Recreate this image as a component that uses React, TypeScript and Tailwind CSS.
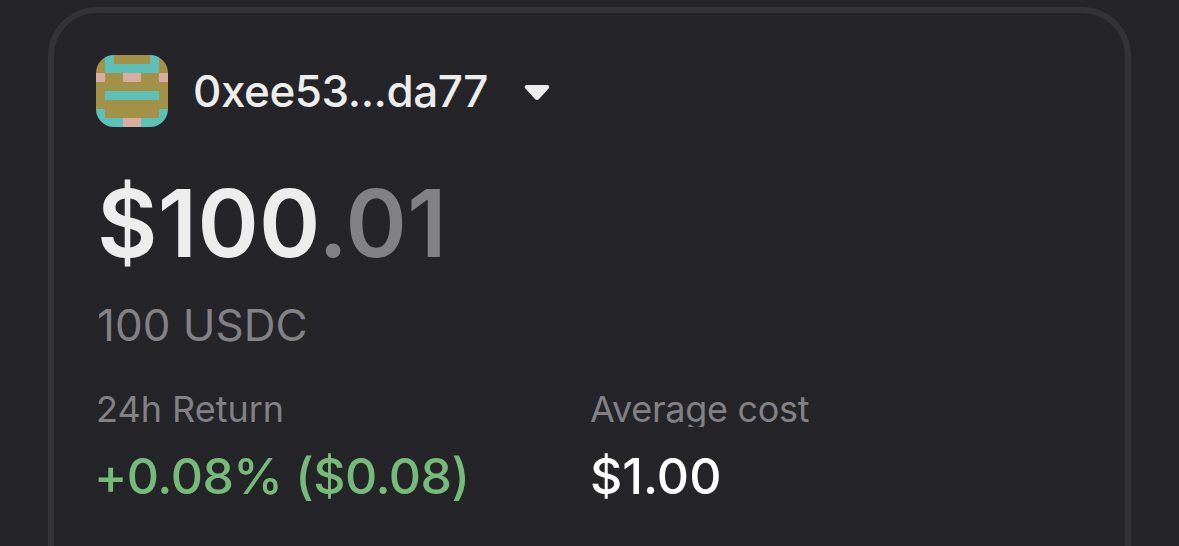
import React from 'react';

const COLORS: Record<string, string> = {
  o: '#a39148',
  t: '#5dc0b9',
  p: '#d7ad9f',
};

const AVATAR_ROWS = [
  'otooooto',
  'otttttto',
  'pooppoop',
  'oooooooo',
  'otttttto',
  'oooooooo',
  'toooooot',
  'tttppttt',
];

const Avatar: React.FC = () => (
  <svg viewBox="0 0 8 8" shapeRendering="crispEdges" className="size-[72px] rounded-[18px]">
    {AVATAR_ROWS.map((row, y) =>
      row.split('').map((cell, x) => (
        <rect key={`${x}-${y}`} x={x} y={y} width={1} height={1} fill={COLORS[cell]} />
      ))
    )}
  </svg>
);

const App: React.FC = () => {
  return (
    <div className="h-[546px] overflow-hidden bg-[#252429] px-12 pt-[7px] font-['Inter',sans-serif] whitespace-nowrap">
      <div className="h-[640px] rounded-[49px] border-6 border-[#343338] px-[42px] pt-[42px]">
        <button className="flex h-[72px] items-center">
          <Avatar />
          <span className="ml-[25px] w-[300px] text-left text-[44px] leading-[72px] font-medium tracking-[-0.45px] text-[#ededed]">
            0xee53...da77
          </span>
          <svg viewBox="0 0 26 18" className="mt-[3px] ml-[31px] h-[18px] w-[26px]" fill="#ededed">
            <path d="M3 1h20c2 0 3 2 1.6 3.5l-9.8 10.7c-1 1.1-2.6 1.1-3.6 0L1.4 4.5C0 3 1 1 3 1z" />
          </svg>
        </button>

        <h1 className="mt-[40px] ml-px h-[112px] text-[93px] leading-[112px] font-semibold tracking-[0.3px] text-[#ededed]">
          $100<span className="text-[#828286]">.01</span>
        </h1>

        <p className="mt-[20px] ml-px h-[52px] text-[44px] leading-[52px] text-[#828286]">
          100 USDC
        </p>

        <div className="mt-[36px] flex">
          <div className="w-[494px]">
            <p className="h-[40px] text-[36px] leading-[44px] text-[#828286]">24h Return</p>
            <p className="mt-[19px] -ml-[2px] text-[50px] leading-[60px] font-medium tracking-[-0.5px] text-[#76bb7a]">
              +0.08% ($0.08)
            </p>
          </div>
          <div>
            <p className="h-[40px] overflow-hidden text-[36px] leading-[44px] tracking-[-0.3px] text-[#828286]">
              Average cost
            </p>
            <p className="mt-[19px] text-[50px] leading-[60px] font-medium text-white">$1.00</p>
          </div>
        </div>
      </div>
    </div>
  );
};

export default App;
